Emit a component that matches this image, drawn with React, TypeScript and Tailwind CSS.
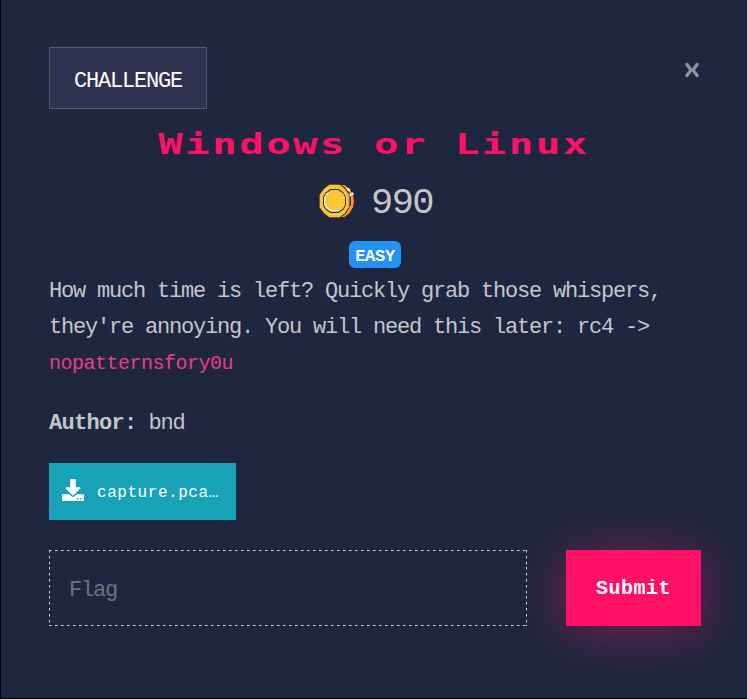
import React from "react";

function Coin() {
  return (
    <svg width="36" height="34" viewBox="0 0 36 34" className="shrink-0">
      <path d="M22 0h4l5 4 3.500 6 1.500 7-1.500 7-3.500 6-5 4h-4z" fill="#3a2c26" />
      <path d="M22 1h3.500l5 4 3.500 6 1 6-1 6-3.500 6-5 4H22z" fill="#f7952f" />
      <path d="M26.500 5l4.500 1M29.500 11l5-1.500" stroke="#fff3e4" strokeWidth="2.600" fill="none" />
      <path d="M25.500 3.500l4 5 2 1M31.500 13v9" stroke="#4a3326" strokeWidth="1" fill="none" />
      <path d="M10 0h11l5.500 4 4 6.500v13l-4 6.500-5.500 4H10l-5.500-4L0 23.500v-13L4.500 4z" fill="#3a2f28" />
      <path d="M10.500 .7h10l5.300 4 4 6v12.600l-4 6-5.300 4h-10l-5.300-4L.7 23.300V10.700l4.500-6z" fill="#fdc639" />
      <path d="M11.500 5h8l5 3.500 2.500 4.500v8l-2.500 4.500-5 3.500h-8l-5-3.500L4 21v-8l2.500-4.500z" fill="#2d303c" />
      <path d="M12 6.200h7l4.700 3 2.300 4v7.600l-2.300 4-4.700 3h-7l-4.700-3-2.300-4v-7.600l2.300-4z" fill="#fff0cc" />
      <path d="M12.500 6.200H19l4.700 3 2.300 4v7.600l-2.300 3.200-3.700 2.200h-7l-4-2.500-2.500-3.500v-6.700l2.300-4z" fill="#fdc639" />
    </svg>
  );
}

function CloseIcon() {
  return (
    <svg width="16" height="14" viewBox="0 0 16 14" fill="none">
      <path d="M1.500 1.500h1.500L7 7 3 12.500H1.500M14.500 1.500H13L9 7l4 5.500h1.500M6 7h4" stroke="#8f929f" strokeWidth="3.200" strokeLinejoin="round" />
    </svg>
  );
}

function DownloadIcon() {
  return (
    <svg width="22" height="22" viewBox="0 0 512 512" fill="#fff">
      <path d="M216 0h80c13.300 0 24 10.700 24 24v168h87.700c17.800 0 26.700 21.500 14.100 34.100L269.700 378.300c-7.500 7.500-19.800 7.500-27.300 0L90.100 226.100c-12.600-12.600-3.700-34.100 14.100-34.100H192V24c0-13.300 10.700-24 24-24zm296 376v112c0 13.300-10.700 24-24 24H24c-13.300 0-24-10.700-24-24V376c0-13.300 10.700-24 24-24h146.700l49 49c20.100 20.100 52.500 20.100 72.600 0l49-49H488c13.300 0 24 10.700 24 24zm-124 88c0-11-9-20-20-20s-20 9-20 20 9 20 20 20 20-9 20-20zm64 0c0-11-9-20-20-20s-20 9-20 20 9 20 20 20 20-9 20-20z" />
    </svg>
  );
}

const dashH = "repeating-linear-gradient(90deg,#d6d9df 0 2px,#71778a 2px 3px,transparent 3px 6px)";
const dashV = "repeating-linear-gradient(180deg,#d6d9df 0 2px,#71778a 2px 3px,transparent 3px 5.8px)";
const dashedFrame = {
  backgroundImage: [dashH, dashH, dashV, dashV].join(","),
  backgroundSize: "100% 1px,100% 1px,1px 100%,1px 100%",
  backgroundPosition: "left top,left bottom,left top,right top",
  backgroundRepeat: "no-repeat",
};

export default function App() {
  return (
    <main className="h-[699px] w-[747px] overflow-hidden border-b border-l border-black bg-[#1f263f] pt-[47px] pr-[46px] pl-[48px] font-['Liberation_Mono',monospace] text-[22px] tracking-[-1.2px] text-[#c4c5c8]">
      <header className="flex h-[62px] items-start justify-between">
        <div className="flex h-[62px] w-[158px] items-center justify-center border border-[#585a60] bg-[#2f3250] pt-[6px] text-white">
          CHALLENGE
        </div>
        <button aria-label="Close" className="mt-[16px] mr-[1px]">
          <CloseIcon />
        </button>
      </header>

      <h1 className="mt-[17px] h-[36px] w-[650px] scale-x-[1.4] text-center font-['DejaVu_Sans_Mono',monospace] text-[29px] leading-[36px] font-bold tracking-[1.8px] whitespace-nowrap text-[#ff1166]">
        Windows or Linux
      </h1>

      <div className="mt-[19px] flex h-[44px] justify-center gap-[16px] pl-[2px]">
        <div className="pt-[3px]">
          <Coin />
        </div>
        <span className="text-[37px] leading-[44px] tracking-[-1.5px]">990</span>
      </div>

      <div className="mt-[16px] flex justify-center">
        <span className="flex h-[27px] w-[52px] items-center justify-center rounded-[6px] bg-[#2492f0] pt-[5px] text-[17px] font-bold tracking-[-0.3px] text-white">
          EASY
        </span>
      </div>

      <p className="mt-[6px] h-[108px] leading-[36px]">
        How much time is left? Quickly grab those whispers,
        <br />
        they're annoying. You will need this later: rc4 -&gt;
        <br />
        <code className="font-['Liberation_Mono',monospace] text-[20px] tracking-[-0.5px] text-[#e83e8c]">nopatternsfory0u</code>
      </p>

      <p className="mt-[24px] h-[36px] leading-[36px]">
        <strong className="tracking-[-0.7px]">Author:</strong> bnd
      </p>

      <a className="mt-[21px] flex h-[57px] w-[187px] items-center bg-[#18a2b8] pl-[13px] text-[16px] tracking-[0.55px] text-white">
        <div className="-mt-[3px]">
          <DownloadIcon />
        </div>
        <span className="pt-[3px] pl-[13px]">capture.pca…</span>
      </a>

      <form className="mt-[30px] flex h-[76px] justify-between">
        <input
          aria-label="Flag"
          placeholder="Flag"
          style={dashedFrame}
          className="h-[76px] w-[478px] bg-transparent pt-[4px] pl-[20px] outline-none placeholder:text-[#6c757d]"
        />
        <button
          type="button"
          className="h-[76px] w-[135px] bg-[#ff1166] pt-[2px] text-[20px] font-bold tracking-[0.5px] text-white shadow-[0_5px_50px_rgba(255,17,102,0.4)]"
        >
          Submit
        </button>
      </form>
    </main>
  );
}
